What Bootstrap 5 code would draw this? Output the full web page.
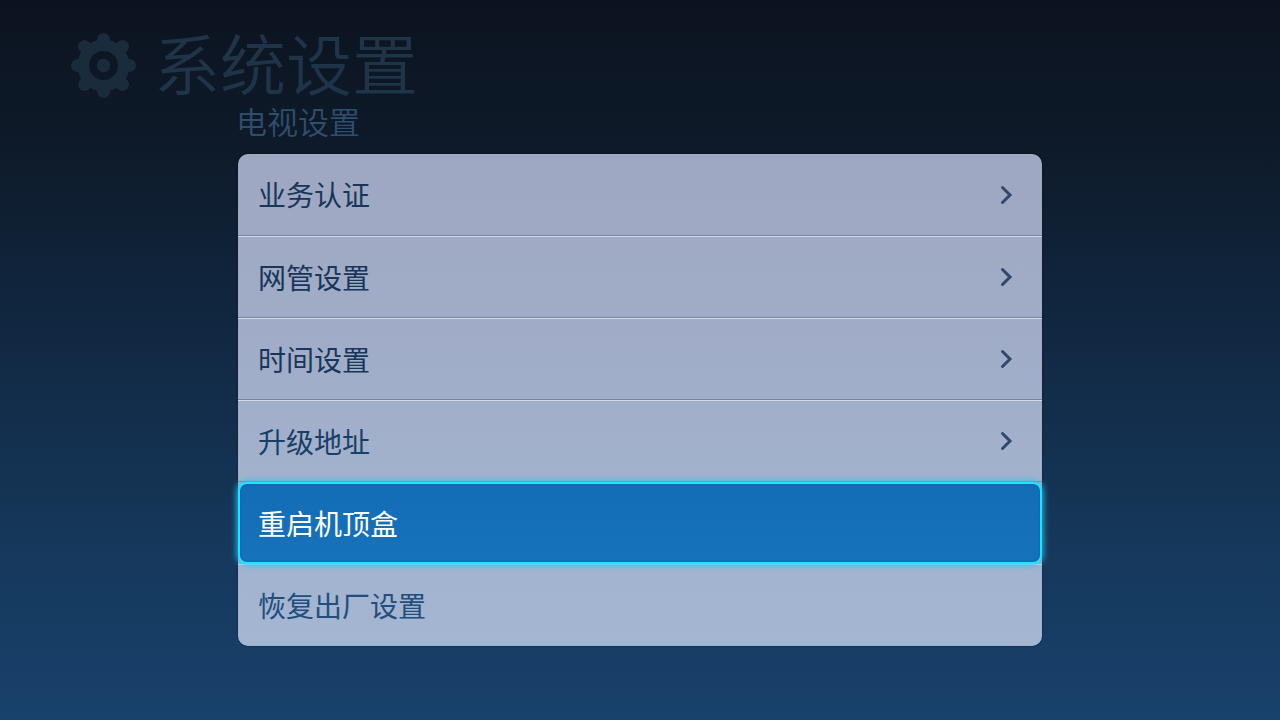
<!DOCTYPE html>
<html lang="zh-CN">
<head>
<meta charset="utf-8">
<meta name="viewport" content="width=device-width, initial-scale=1">
<title>系统设置</title>
<link href="https://cdn.jsdelivr.net/npm/bootstrap@5.3.0/dist/css/bootstrap.min.css" rel="stylesheet">
<style>
  body {
    min-height: 100vh;
    background: linear-gradient(180deg, #0c1320 0%, #0e1a29 20%, #122b47 52%, #163a5e 80%, #18416b 100%);
    font-family: "Noto Sans CJK SC", sans-serif;
    font-weight: 350;
  }
  .page-head { padding: 28px 70px 0; gap: 17px; height: 105px; }
  .page-head svg { width: 67px; height: 67px; margin-top: 4px; }
  .page-title { font-size: 66px; line-height: 66px; font-weight: 350; color: #1f3349; }
  .settings { max-width: 804px; }
  .section-title { font-size: 31px; line-height: 32px; font-weight: 350; color: #2e4e6e; margin: 0 0 17px -2px; }
  .menu-list {
    border-radius: 10px;
    background: linear-gradient(180deg, #9fa7c1, #a3b6d2);
    box-shadow: 0 0 2px rgba(0, 5, 25, .8);
  }
  .menu-row {
    height: 82px;
    padding: 0 28px 0 20px;
    border: 0;
    background: transparent;
    font-size: 28px;
    line-height: 40px;
    color: #17365a;
  }
  .menu-row span { margin-bottom: 1px; }
  .menu-row:not(:last-child) { border-bottom: 1px solid #77839f; }
  .menu-row + .menu-row { border-top: 1px solid #d2daea; }
  .menu-row:nth-child(4) { color: #183f68; }
  .menu-row:last-child { color: #234d7c; }
  .menu-row svg { width: 14px; height: 20px; }
  .menu-row.selected {
    position: relative;
    padding: 0 26px 0 18px;
    border: 2px solid #1ae6ff;
    border-radius: 9px;
    background: linear-gradient(180deg, #136db6, #1672ba);
    box-shadow: 0 0 6px 1px #20c8f4, inset 0 0 2px #0d579b;
    color: #fff;
  }
</style>
</head>
<body>
<header class="page-head d-flex align-items-start">
  <svg viewBox="0 0 67 67" aria-hidden="true">
    <defs>
      <mask id="hub" maskUnits="userSpaceOnUse" x="0" y="0" width="67" height="67">
        <rect width="67" height="67" fill="#fff"/>
        <circle cx="33.500" cy="33.500" r="14.500" fill="#000"/>
        <circle cx="33.500" cy="33.500" r="6.700" fill="#fff"/>
      </mask>
    </defs>
    <g mask="url(#hub)" fill="#1a2b3c">
      <circle cx="33.500" cy="33.500" r="26"/>
      <path stroke="#1a2b3c" stroke-width="13" stroke-linecap="round" d="M33.500 7.500v52M7.500 33.500h52M14.500 14.500l38 38M14.500 52.500l38-38"/>
    </g>
  </svg>
  <h1 class="page-title mb-0">系统设置</h1>
</header>
<main class="settings mx-auto">
  <h2 class="section-title">电视设置</h2>
  <nav class="menu-list d-flex flex-column" aria-label="电视设置">
    <button type="button" class="menu-row d-flex align-items-center justify-content-between"><span>业务认证</span><svg viewBox="0 0 14 20" fill="none" stroke="#30486a" stroke-width="3" stroke-linecap="round" aria-hidden="true"><path d="M2.500 2.500l7.500 7.500-7.500 7.500"/></svg></button>
    <button type="button" class="menu-row d-flex align-items-center justify-content-between"><span>网管设置</span><svg viewBox="0 0 14 20" fill="none" stroke="#30486a" stroke-width="3" stroke-linecap="round" aria-hidden="true"><path d="M2.500 2.500l7.500 7.500-7.500 7.500"/></svg></button>
    <button type="button" class="menu-row d-flex align-items-center justify-content-between"><span>时间设置</span><svg viewBox="0 0 14 20" fill="none" stroke="#30486a" stroke-width="3" stroke-linecap="round" aria-hidden="true"><path d="M2.500 2.500l7.500 7.500-7.500 7.500"/></svg></button>
    <button type="button" class="menu-row d-flex align-items-center justify-content-between"><span>升级地址</span><svg viewBox="0 0 14 20" fill="none" stroke="#30486a" stroke-width="3" stroke-linecap="round" aria-hidden="true"><path d="M2.500 2.500l7.500 7.500-7.500 7.500"/></svg></button>
    <button type="button" class="menu-row selected d-flex align-items-center" aria-current="true"><span>重启机顶盒</span></button>
    <button type="button" class="menu-row d-flex align-items-center"><span>恢复出厂设置</span></button>
  </nav>
</main>
<script src="https://cdn.jsdelivr.net/npm/bootstrap@5.3.0/dist/js/bootstrap.bundle.min.js"></script>
</body>
</html>
